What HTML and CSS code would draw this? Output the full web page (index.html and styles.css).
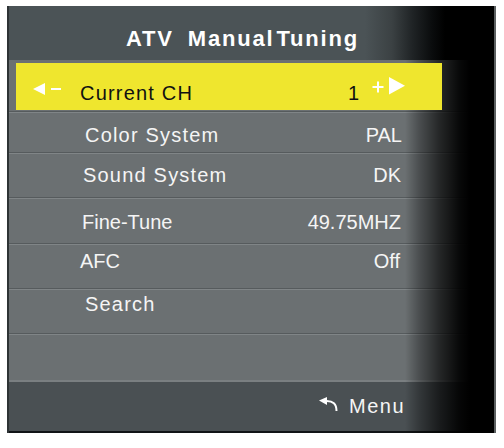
FILE: index.html
```html
<!DOCTYPE html>
<html>
<head>
<meta charset="utf-8">
<link rel="stylesheet" href="styles.css">
</head>
<body>
<div class="osd">
  <div class="osd-head">
    <span class="title-word">ATV</span>
    <span class="title-word title-gap">Manual</span>
    <span class="title-word title-tight">Tuning</span>
  </div>
  <div class="osd-body">
    <div class="row row-active">
      <div class="hl">
        <svg class="arrow-l" width="28" height="12" viewBox="0 0 28 12"><polygon points="0,6 12,0 12,12" fill="#fff"/><rect x="18" y="5" width="10" height="2" fill="#fff"/></svg>
        <span class="label wide">Current CH</span>
        <span class="hl-value">1</span>
        <svg class="arrow-r" width="33" height="18" viewBox="0 0 33 18"><rect x="0.5" y="9" width="11" height="2" fill="#fff"/><rect x="5" y="4.5" width="2" height="11" fill="#fff"/><polygon points="17,0 33,8.7 17,17.5" fill="#fff"/></svg>
      </div>
    </div>
    <div class="row row-color"><span class="label wide">Color System</span><span class="value">PAL</span></div>
    <div class="row row-sound"><span class="label wide">Sound System</span><span class="value">DK</span></div>
    <div class="row row-fine"><span class="label">Fine-Tune</span><span class="value">49.75MHZ</span></div>
    <div class="row row-afc"><span class="label">AFC</span><span class="value">Off</span></div>
    <div class="row row-search"><span class="label wide">Search</span></div>
    <div class="row row-empty"></div>
  </div>
  <div class="osd-foot">
    <svg class="back" width="20" height="14" viewBox="0 0 20 14"><polygon points="0,3.5 8,0 8,8" fill="#fff"/><path d="M7 4 Q17.5 3.5 17.5 14" fill="none" stroke="#fff" stroke-width="2"/></svg>
    <span class="menu">Menu</span>
  </div>
</div>
</body>
</html>
```
FILE: styles.css
```css
html, body {
  margin: 0;
  padding: 0;
  background: #ffffff;
}

body {
  font-family: "Liberation Sans", Arial, sans-serif;
  color: #f5f5f5;
}

.osd {
  position: relative;
  isolation: isolate;
  box-sizing: border-box;
  margin: 6px 0 0 7px;
  width: 489px;
  height: 427px;
  border-left: 2px solid #2e3335;
  border-right: 2px solid #5c6061;
  background: #6b7072;
  display: flex;
  flex-direction: column;
}

.osd::after {
  content: "";
  position: absolute;
  top: 54px;
  left: 0;
  right: 0;
  bottom: 0;
  z-index: 1;
  background: linear-gradient(to right,
    rgba(0,0,0,0) 0,
    rgba(0,0,0,0) 396px,
    rgba(0,0,0,0.3) 410px,
    rgba(0,0,0,0.65) 430px,
    rgba(0,0,0,0.92) 450px,
    #000 461px);
}

.osd-head {
  box-sizing: border-box;
  height: 54px;
  padding: 22px 18px 0 0;
  display: flex;
  justify-content: center;
  align-items: flex-start;
  font-weight: bold;
  font-size: 22px;
  line-height: 22px;
  letter-spacing: 1.8px;
  color: #ffffff;
  background: linear-gradient(to right,
    #4b5356 0,
    #4b5356 356px,
    #3b4143 383px,
    #202426 403px,
    #0a0c0d 423px,
    #000 436px);
}

.title-gap {
  margin-left: 14px;
}

.title-tight {
  margin-left: 2px;
}

.osd-body {
  display: flex;
  flex-direction: column;
}

.row {
  box-sizing: border-box;
  display: flex;
  justify-content: space-between;
  align-items: flex-start;
  font-size: 20px;
  line-height: 20px;
  border-top: 1px solid #565b5d;
  box-shadow: inset 0 1px 0 #808587;
}

.row .label,
.row .value {
  position: relative;
  z-index: 2;
}

.label.wide {
  letter-spacing: 1.2px;
}

.row-active {
  height: 51px;
  border-top: 0;
  box-shadow: none;
  padding: 3px 0 1px 7px;
}

.hl {
  position: relative;
  z-index: 2;
  box-sizing: border-box;
  width: 426px;
  height: 47px;
  background: #efe62e;
  color: #111111;
  display: flex;
  align-items: flex-start;
  padding: 0 37px 0 17px;
}

.arrow-l {
  margin-top: 20px;
  flex: none;
}

.hl .label {
  margin-left: 19px;
  padding-top: 20px;
}

.hl-value {
  margin-left: auto;
  padding-top: 20px;
}

.arrow-r {
  margin: 14px 0 0 13px;
  flex: none;
}

.row-color {
  height: 41px;
  padding: 13px 92px 0 76px;
}

.row-sound {
  height: 45px;
  padding: 12px 93px 0 74px;
}

.row-fine {
  height: 46px;
  padding: 14px 93px 0 73px;
}

.row-afc {
  height: 45px;
  padding: 7px 94px 0 71px;
}

.row-search {
  height: 45px;
  padding: 5px 0 0 76px;
}

.row-empty {
  height: 47px;
}

.osd-foot {
  box-sizing: border-box;
  flex: 1;
  display: flex;
  justify-content: flex-end;
  align-items: flex-start;
  padding: 0 89px 0 0;
  background: #4a5053;
  border-top: 2px solid #7a7f81;
  border-bottom: 2px solid #111416;
  font-size: 20px;
  line-height: 20px;
}

.back {
  position: relative;
  z-index: 2;
  margin-top: 15px;
}

.menu {
  position: relative;
  z-index: 2;
  margin-left: 10px;
  padding-top: 14px;
  letter-spacing: 1.5px;
}
```
